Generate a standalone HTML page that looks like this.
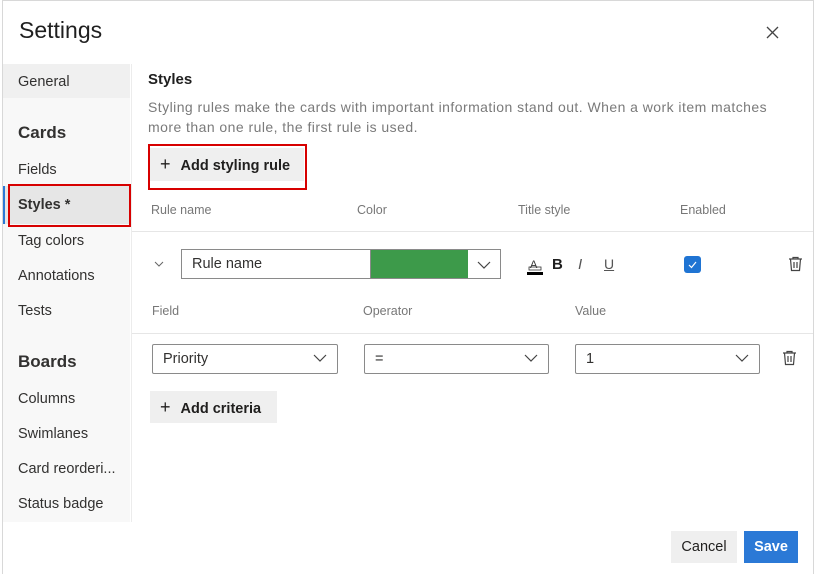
<!DOCTYPE html>
<html><head><meta charset="utf-8"><style>
*{box-sizing:border-box;margin:0;padding:0}
body{width:816px;height:574px;background:#fff;position:relative;overflow:hidden;font-family:"Liberation Sans",sans-serif;color:#1f1f1f}
.a{position:absolute;white-space:nowrap}
.nav{position:absolute;left:18px;font-size:14.5px;color:#323130;line-height:18px}
.hd{position:absolute;font-size:12.5px;color:#777;line-height:14px}
.dd{position:absolute;height:30px;border:1px solid #8a8a8a;border-radius:2px;background:#fff;font-size:14.5px;line-height:28px;padding-left:10px;color:#323130}
.chev{position:absolute;right:10px;top:9px}
.gbtn{position:absolute;background:#efefef;font-size:14.5px;font-weight:bold;color:#201f1e}
</style></head><body>
<div class="a" style="left:2px;top:0;width:812px;height:574px;border:1px solid #d8d8d8;border-bottom:none"></div>
<div class="a" style="left:19px;top:17px;font-size:23px;color:#1f1f1f">Settings</div>
<svg class="a" style="left:766px;top:26px" width="13" height="13" viewBox="0 0 13 13"><path d="M1 1L12 12M12 1L1 12" stroke="#444" stroke-width="1.3"/></svg>

<div class="a" style="left:3px;top:64px;width:127px;height:458px;background:#f8f8f8"></div>
<div class="a" style="left:3px;top:64px;width:127px;height:34px;background:#f0f0f0"></div>
<div class="a" style="left:3px;top:186px;width:127px;height:38px;background:#e6e6e6"></div>
<div class="a" style="left:3px;top:186px;width:2px;height:38px;background:#2b79d6"></div>
<div class="a" style="left:8px;top:184px;width:123px;height:43px;border:2px solid #d70000"></div>
<div class="nav" style="top:73px">General</div>
<div class="nav" style="top:123px;font-size:17px;font-weight:bold;line-height:20px">Cards</div>
<div class="nav" style="top:161px">Fields</div>
<div class="nav" style="top:196px;font-weight:bold">Styles *</div>
<div class="nav" style="top:232px">Tag colors</div>
<div class="nav" style="top:267px">Annotations</div>
<div class="nav" style="top:302px">Tests</div>
<div class="nav" style="top:352px;font-size:17px;font-weight:bold;line-height:20px">Boards</div>
<div class="nav" style="top:390px">Columns</div>
<div class="nav" style="top:425px">Swimlanes</div>
<div class="nav" style="top:460px">Card reorderi...</div>
<div class="nav" style="top:495px">Status badge</div>

<div class="a" style="left:148px;top:71px;font-size:15px;font-weight:bold">Styles</div>
<div class="a" style="left:148px;top:97px;font-size:14px;color:#7a7a7a;line-height:20px;letter-spacing:0.45px">Styling rules make the cards with important information stand out. When a work item matches<br>more than one rule, the first rule is used.</div>

<div class="a" style="left:148px;top:144px;width:159px;height:46px;border:2px solid #d70000"></div>
<div class="gbtn" style="left:150px;top:148px;width:154px;height:33px;line-height:33px;padding-left:10px"><span style="font-weight:normal;font-size:18px;margin-right:10px">+</span>Add styling rule</div>

<div class="hd" style="left:151px;top:203px">Rule name</div>
<div class="hd" style="left:357px;top:203px">Color</div>
<div class="hd" style="left:518px;top:203px">Title style</div>
<div class="hd" style="left:680px;top:203px">Enabled</div>
<div class="a" style="left:131px;top:231px;width:682px;height:1px;background:#e6e6e6"></div>

<svg class="a" style="left:154px;top:261px" width="10" height="6"><path d="M1 1L5 5L9 1" fill="none" stroke="#666" stroke-width="1"/></svg>
<div class="dd" style="left:181px;top:249px;width:190px;border-radius:0">Rule name</div>
<div class="a" style="left:370px;top:249px;width:131px;height:30px;border:1px solid #8a8a8a;background:#fff"></div>
<div class="a" style="left:371px;top:250px;width:97px;height:28px;background:#3d9a4a"></div>
<svg class="a" style="left:477px;top:261px" width="14" height="8"><path d="M1 1L7 7L13 1" fill="none" stroke="#444" stroke-width="1.2"/></svg>

<svg class="a" style="left:526px;top:255px" width="18" height="22"><text x="4" y="13" font-family="Liberation Sans" font-size="11" fill="#333">A</text><rect x="3" y="12" width="12" height="3" fill="none" stroke="#333" stroke-width="0.8"/><rect x="1" y="17" width="16" height="3" fill="#000"/></svg>
<div class="a" style="left:552px;top:256px;font-size:15px;font-weight:bold">B</div>
<div class="a" style="left:578px;top:256px;font-size:15px;font-style:italic;color:#555">I</div>
<div class="a" style="left:604px;top:256px;font-size:14px;color:#555;text-decoration:underline">U</div>
<div class="a" style="left:684px;top:256px;width:17px;height:17px;background:#1f74d3;border-radius:3px"></div>
<svg class="a" style="left:684px;top:256px" width="17" height="17"><path d="M5 9L7.5 11.5L12 6" fill="none" stroke="#fff" stroke-width="1.2"/></svg>

<svg class="a" style="left:788px;top:256px" width="15" height="16" viewBox="0 0 15 16"><path d="M1 3H14M5 3V1.5H10V3M2.5 3L3.5 14.5H11.5L12.5 3M6 6V12M9 6V12" fill="none" stroke="#444" stroke-width="1.2"/></svg>

<div class="hd" style="left:152px;top:304px">Field</div>
<div class="hd" style="left:363px;top:304px">Operator</div>
<div class="hd" style="left:575px;top:304px">Value</div>
<div class="a" style="left:131px;top:333px;width:682px;height:1px;background:#e6e6e6"></div>

<div class="dd" style="left:152px;top:344px;width:186px">Priority<svg class="chev" width="14" height="8"><path d="M1 1L7 7L13 1" fill="none" stroke="#444" stroke-width="1.2"/></svg></div>
<div class="dd" style="left:364px;top:344px;width:185px">=<svg class="chev" width="14" height="8"><path d="M1 1L7 7L13 1" fill="none" stroke="#444" stroke-width="1.2"/></svg></div>
<div class="dd" style="left:575px;top:344px;width:185px">1<svg class="chev" width="14" height="8"><path d="M1 1L7 7L13 1" fill="none" stroke="#444" stroke-width="1.2"/></svg></div>
<svg class="a" style="left:782px;top:350px" width="15" height="16" viewBox="0 0 15 16"><path d="M1 3H14M5 3V1.5H10V3M2.5 3L3.5 14.5H11.5L12.5 3M6 6V12M9 6V12" fill="none" stroke="#444" stroke-width="1.2"/></svg>

<div class="gbtn" style="left:150px;top:391px;width:127px;height:32px;line-height:32px;padding-left:10px"><span style="font-weight:normal;font-size:18px;margin-right:10px">+</span>Add criteria</div>

<div class="a" style="left:131px;top:64px;width:1px;height:458px;background:#ececec"></div>

<div class="gbtn" style="left:671px;top:531px;width:66px;height:32px;line-height:32px;text-align:center;font-weight:normal">Cancel</div>
<div class="gbtn" style="left:744px;top:531px;width:54px;height:32px;line-height:32px;text-align:center;background:#2b79d6;color:#fff">Save</div>
</body></html>
